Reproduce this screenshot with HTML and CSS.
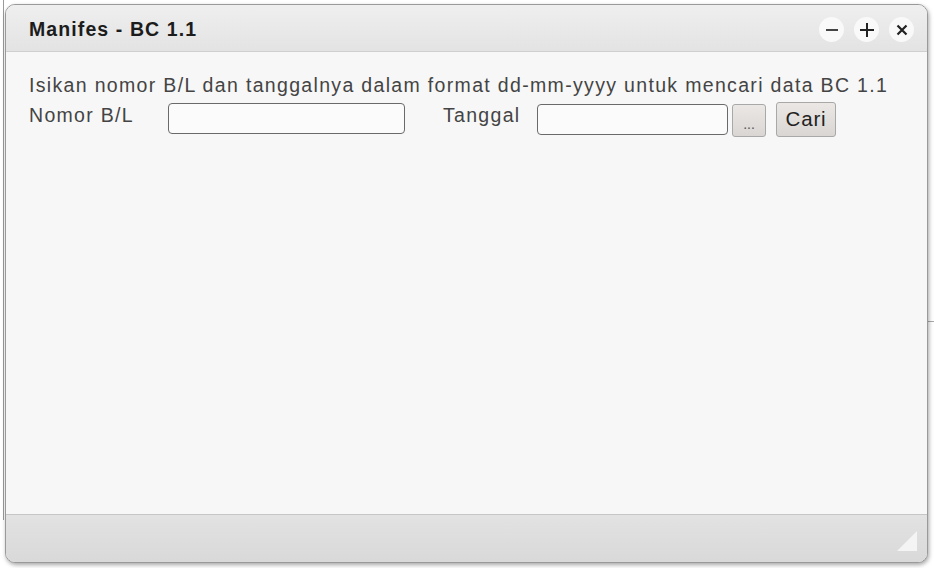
FILE: index.html
```html
<!DOCTYPE html>
<html>
<head>
<meta charset="utf-8">
<link rel="stylesheet" href="styles.css">
</head>
<body>
<div class="backdrop">
  <div class="under"></div>
  <div class="under-line"></div>
  <div class="window">
    <div class="titlebar">
      <div class="title">Manifes - BC 1.1</div>
      <div class="controls">
        <span class="ctl"><svg width="16" height="14" viewBox="0 0 16 14"><path d="M2 7h12" stroke="#444" stroke-width="2"/></svg></span>
        <span class="ctl"><svg width="16" height="16" viewBox="0 0 16 16"><path d="M1 8h14M8 1v14" stroke="#222" stroke-width="2"/></svg></span>
        <span class="ctl"><svg width="14" height="14" viewBox="0 0 14 14"><path d="M2.5 2.5l9 9M11.5 2.5l-9 9" stroke="#222" stroke-width="2.2"/></svg></span>
      </div>
    </div>
    <div class="content">
      <p class="hint">Isikan nomor B/L dan tanggalnya dalam format dd-mm-yyyy untuk mencari data BC 1.1</p>
      <div class="row">
        <label class="lbl lbl-bl">Nomor B/L</label>
        <input class="field field-bl" type="text">
        <label class="lbl lbl-tgl">Tanggal</label>
        <input class="field field-tgl" type="text">
        <button class="btn btn-pick">...</button>
        <button class="btn btn-cari">Cari</button>
      </div>
    </div>
    <div class="footer">
      <svg class="grip" width="20" height="20" viewBox="0 0 20 20"><path d="M20 0V20H0Z" fill="#f4f4f4"/></svg>
    </div>
  </div>
</div>
</body>
</html>
```
FILE: styles.css
```css
html, body {
  margin: 0;
  padding: 0;
  background: #ffffff;
  font-family: "Liberation Sans", Arial, sans-serif;
}
.backdrop {
  position: relative;
  width: 934px;
  height: 568px;
  overflow: hidden;
}
.under {
  position: absolute;
  left: 3px;
  top: 0;
  width: 1px;
  height: 520px;
  background: #9a9a9a;
}
.under-line {
  position: absolute;
  left: 928px;
  top: 321px;
  width: 6px;
  height: 1px;
  background: #aaa;
}
.window {
  position: absolute;
  left: 5px;
  top: 4px;
  width: 923px;
  height: 559px;
  box-sizing: border-box;
  border: 1px solid #9a9a9a;
  border-radius: 10px;
  background: #f7f7f7;
  box-shadow: 1px 2px 4px rgba(0,0,0,0.35);
  display: flex;
  flex-direction: column;
  overflow: hidden;
}
.titlebar {
  height: 47px;
  flex: none;
  box-sizing: border-box;
  background: linear-gradient(#efefef, #e3e3e3);
  border-bottom: 1px solid #cfcfcf;
  display: flex;
  align-items: center;
  justify-content: space-between;
  padding: 3px 13px 0 23px;
}
.title {
  font-weight: bold;
  font-size: 19.5px;
  letter-spacing: 1.1px;
  color: #1c1c1c;
}
.controls {
  display: flex;
  gap: 10px;
}
.ctl {
  width: 25px;
  height: 25px;
  border-radius: 50%;
  background: #f9f9f9;
  display: flex;
  align-items: center;
  justify-content: center;
}
.content {
  flex: 1;
  padding: 22px 0 0 23px;
  color: #444;
}
.hint {
  margin: 0;
  font-size: 19.5px;
  letter-spacing: 1.33px;
  line-height: 22px;
  white-space: nowrap;
}
.row {
  display: flex;
  align-items: flex-start;
  margin-top: 7px;
}
.lbl {
  font-size: 19.5px;
  letter-spacing: 1.3px;
  line-height: 22px;
  padding-top: 1px;
}
.lbl-bl { width: 139px; }
.lbl-tgl { margin-left: 38px; width: 94px; }
.field {
  box-sizing: border-box;
  height: 31px;
  border: 1px solid #6a6a6a;
  border-radius: 4px;
  background: #fbfbfb;
  margin: 0;
  padding: 0 4px;
  font-family: inherit;
}
.field-bl { width: 237px; margin-top: 0; }
.field-tgl { width: 191px; margin-top: 1px; }
.btn {
  box-sizing: border-box;
  margin: 0;
  border: 1px solid #a8a8a8;
  border-radius: 3px;
  background: linear-gradient(#ebe7e4, #d9d6d3);
  color: #222;
  font-family: inherit;
  padding: 0;
}
.btn-pick {
  width: 34px;
  height: 33px;
  margin-left: 4px;
  margin-top: 1px;
  font-size: 14px;
  color: #555;
  padding-top: 6px;
}
.btn-cari {
  width: 60px;
  height: 35px;
  margin-left: 10px;
  margin-top: -1px;
  font-size: 20.5px;
  letter-spacing: 0.8px;
  padding-bottom: 1px;
}
.footer {
  height: 48px;
  flex: none;
  box-sizing: border-box;
  border-top: 1px solid #c6c6c6;
  background: linear-gradient(#e2e2e2, #d9d9d9);
  position: relative;
}
.grip {
  position: absolute;
  right: 10px;
  bottom: 11px;
}
```
